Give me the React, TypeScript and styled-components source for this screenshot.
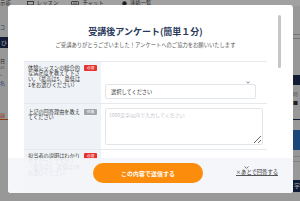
import React from "react";
import styled, { createGlobalStyle } from "styled-components";

const GlobalStyle = createGlobalStyle`
  html, body { margin: 0; padding: 0; }
  body {
    width: 300px;
    height: 201px;
    overflow: hidden;
    font-family: "Noto Sans CJK JP", "Noto Sans", sans-serif;
  }
`;

/* ---------- page behind the dialog ---------- */

const Page = styled.div`
  position: relative;
  width: 300px;
  height: 201px;
  overflow: hidden;
  background: #f1f1f1;
  display: flex;
  flex-direction: column;
`;

const TopNav = styled.nav`
  height: 6px;
  flex: none;
  background: #fff;
  display: flex;
  align-items: center;
  white-space: nowrap;
  overflow: hidden;
  font-size: 5.4px;
  line-height: 6px;
  color: #444;
`;

const NavItem = styled.span<{ $gap?: number }>`
  display: inline-flex;
  align-items: center;
  gap: 3px;
  margin-left: ${(p) => p.$gap ?? 0}px;
`;

const PageBody = styled.div`
  flex: 1;
  display: flex;
`;

const LeftRail = styled.div`
  width: 8px;
  overflow: hidden;
  display: flex;
  flex-direction: column;
  font-size: 5px;
  line-height: 6px;
  color: #333;
  white-space: nowrap;
`;

const RailText = styled.div<{ $color?: string; $top: number; $size?: number }>`
  margin-top: ${(p) => p.$top}px;
  font-size: ${(p) => p.$size ?? 5}px;
  color: ${(p) => p.$color ?? "#333"};
`;

const RailBlock = styled.div<{ $color: string; $top: number; $h: number }>`
  margin-top: ${(p) => p.$top}px;
  height: ${(p) => p.$h}px;
  background: ${(p) => p.$color};
  color: #fff;
  font-size: 6px;
  line-height: ${(p) => p.$h}px;
  padding-left: 1px;
  flex: none;
`;

const RailRule = styled.div<{ $color: string; $top: number }>`
  margin-top: ${(p) => p.$top}px;
  height: 1px;
  background: ${(p) => p.$color};
`;

const Main = styled.div`
  flex: 1;
`;

const RightRail = styled.div`
  width: 7px;
  overflow: hidden;
  display: flex;
  flex-direction: column;
  font-size: 5px;
  line-height: 6px;
  white-space: nowrap;
`;

const Overlay = styled.div`
  position: absolute;
  inset: 0;
  background: rgba(0, 0, 0, 0.37);
`;

/* ---------- dialog ---------- */

const Modal = styled.div`
  position: absolute;
  top: 5px;
  left: 8px;
  width: 285px;
  height: 188px;
  background: #fff;
  border-radius: 3px;
  overflow: hidden;
`;

const ModalBody = styled.div`
  padding: 21px 26px 0 16px;
`;

const Title = styled.h2`
  margin: 0;
  font-size: 9px;
  line-height: 12px;
  font-weight: 700;
  text-align: center;
  color: #28395a;
`;

const Lead = styled.p`
  margin: 3.5px 0 0;
  font-size: 5.3px;
  line-height: 7px;
  text-align: center;
  color: #555;
  white-space: nowrap;
`;

const Table = styled.div`
  margin-top: 12px;
  border-top: 1px solid #e6e9ee;
`;

const Row = styled.div<{ $h: number }>`
  display: grid;
  grid-template-columns: 77px 1fr;
  height: ${(p) => p.$h}px;
  border-bottom: 1px solid #e6e9ee;
`;

const LabelCell = styled.div<{ $pad: number }>`
  background: #eff2f6;
  padding: ${(p) => p.$pad}px 4px 0 4px;
  display: flex;
  align-items: flex-start;
  gap: 3px;
`;

const LabelText = styled.div`
  width: 53px;
  font-size: 5.2px;
  line-height: 5.8px;
  color: #333;
`;

const Badge = styled.span<{ $tone: "required" | "optional" }>`
  flex: none;
  width: 13px;
  height: 6px;
  margin-top: 0.5px;
  border-radius: 1px;
  background: ${(p) => (p.$tone === "required" ? "#e5322d" : "#a2a5aa")};
  color: #fff;
  font-size: 3.8px;
  line-height: 6px;
  text-align: center;
`;

const InputCell = styled.div<{ $pad: string; $align: string }>`
  padding: ${(p) => p.$pad};
  display: flex;
  align-items: ${(p) => p.$align};
`;

const SelectWrap = styled.div`
  position: relative;
  width: 151px;
  height: 15px;
`;

const Select = styled.select`
  appearance: none;
  width: 100%;
  height: 100%;
  box-sizing: border-box;
  border: 1px solid #e2e5ea;
  border-radius: 2px;
  background: #fff;
  padding: 0 0 0 5px;
  font-family: inherit;
  font-size: 5.2px;
  color: #333;
  outline: none;
`;

const Chevron = styled.svg`
  position: absolute;
  right: 6px;
  top: 6px;
  pointer-events: none;
`;

const TextArea = styled.textarea`
  width: 158px;
  height: 37px;
  box-sizing: border-box;
  border: 1px solid #e2e5ea;
  border-radius: 2px;
  padding: 3px 3px;
  font-family: inherit;
  font-size: 5px;
  line-height: 6px;
  color: #333;
  resize: vertical;
  outline: none;
  &::placeholder {
    color: #c2c5ca;
  }
`;

const ScrollThumb = styled.div`
  position: absolute;
  left: 270px;
  top: 10px;
  width: 3px;
  height: 53px;
  border-radius: 2px;
  background: #c6c6c6;
`;

const Footer = styled.div`
  position: absolute;
  left: 0;
  right: 0;
  bottom: 0;
  height: 35px;
  box-sizing: border-box;
  padding: 5px 5px 0 0;
  background: rgba(244, 245, 249, 0.9);
  display: flex;
  justify-content: center;
  align-items: flex-start;
`;

const SubmitButton = styled.button`
  width: 110px;
  height: 20px;
  border: none;
  border-radius: 10px;
  background: #fb8c0c;
  color: #fff;
  font-family: inherit;
  font-size: 5.9px;
  font-weight: 700;
  letter-spacing: 0.1px;
`;

const LaterLink = styled.a`
  position: absolute;
  right: 15px;
  top: 11px;
  display: flex;
  flex-direction: column;
  align-items: center;
  font-size: 5.3px;
  line-height: 7px;
  color: #333;
  text-decoration: none;
  white-space: nowrap;
`;

const LaterText = styled.span`
  border-bottom: 0.6px solid #555;
  line-height: 6px;
`;

const ScrollHint = styled.svg`
  position: absolute;
  right: 44px;
  top: 8px;
`;

const MonitorIcon = () => (
  <svg width="7" height="5" viewBox="0 0 7 5">
    <rect x="0.5" y="0.5" width="6" height="3.4" fill="none" stroke="#444" strokeWidth="0.8" />
    <rect x="2" y="4.3" width="3" height="0.7" fill="#444" />
  </svg>
);

const ChatIcon = () => (
  <svg width="8" height="5" viewBox="0 0 8 5">
    <rect x="0.5" y="0.5" width="7" height="3.4" rx="0.6" fill="none" stroke="#444" strokeWidth="0.8" />
    <path d="M2 2.2h4" stroke="#444" strokeWidth="0.6" />
  </svg>
);

const DotIcon = () => (
  <svg width="5" height="5" viewBox="0 0 5 5">
    <circle cx="2.5" cy="2.5" r="2.2" fill="#333" />
  </svg>
);

const App: React.FC = () => {
  return (
    <>
      <GlobalStyle />
      <Page>
        <TopNav>
          <NavItem>示板</NavItem>
          <NavItem $gap={16}>
            <MonitorIcon />
            レッスン
          </NavItem>
          <NavItem $gap={13}>
            <ChatIcon />
            チャット
          </NavItem>
          <NavItem $gap={18}>
            <DotIcon />
            連絡一覧
          </NavItem>
        </TopNav>
        <PageBody>
          <LeftRail>
            <RailText $top={18} $color="#2f5fb3">
              コ
            </RailText>
            <RailBlock $top={7} $h={11} $color="#1c2c55">
              ひ
            </RailBlock>
            <RailText $top={10}>日</RailText>
            <RailText $top={0} $color="#777" $size={4}>
              35
            </RailText>
            <RailText $top={0} $color="#777">
              、
            </RailText>
            <RailText $top={4} $color="#2f5fb3">
              名
            </RailText>
            <RailText $top={26} $color="#e0581f">
              録
            </RailText>
            <RailRule $top={1} $color="#e0581f" />
          </LeftRail>
          <Main />
          <RightRail>
            <RailRule $top={28} $color="#bbb" />
            <RailRule $top={3} $color="#bbb" />
            <RailBlock $top={36} $h={10} $color="#1c2c55" />
            <RailText $top={6} $color="#888">
              時
            </RailText>
            <RailText $top={2}>■</RailText>
            <RailRule $top={14} $color="#1c2c55" />
            <RailBlock $top={10} $h={20} $color="#2d72c0" />
            <RailRule $top={6} $color="#ccc" />
            <RailRule $top={4} $color="#ccc" />
            <RailBlock $top={18} $h={12} $color="#1c2c55">
              字
            </RailBlock>
          </RightRail>
        </PageBody>
        <Overlay />
        <Modal>
          <ModalBody>
            <Title>受講後アンケート(簡単１分)</Title>
            <Lead>ご受講ありがとうございました！アンケートへのご協力をお願いいたします</Lead>
            <Table>
              <Row $h={41}>
                <LabelCell $pad={3}>
                  <LabelText>
                    体験レッスンの総合的な満足度を教えて下さい。（最高は5、最低は1をお選びください）
                  </LabelText>
                  <Badge $tone="required">必須</Badge>
                </LabelCell>
                <InputCell $pad="0 4px" $align="center">
                  <SelectWrap>
                    <Select defaultValue="">
                      <option value="">選択してください</option>
                      <option value="5">5</option>
                      <option value="4">4</option>
                      <option value="3">3</option>
                      <option value="2">2</option>
                      <option value="1">1</option>
                    </Select>
                    <Chevron width="4" height="3" viewBox="0 0 4 3">
                      <path d="M0.4 0.5 2 2.2 3.6 0.5" fill="none" stroke="#555" strokeWidth="0.7" />
                    </Chevron>
                  </SelectWrap>
                </InputCell>
              </Row>
              <Row $h={45}>
                <LabelCell $pad={5}>
                  <LabelText>上記の回答理由を教えてください</LabelText>
                  <Badge $tone="optional">任意</Badge>
                </LabelCell>
                <InputCell $pad="4px 4px 0 4px" $align="flex-start">
                  <TextArea placeholder="1000文字以内で入力してください" />
                </InputCell>
              </Row>
              <Row $h={45}>
                <LabelCell $pad={3}>
                  <LabelText>
                    担当者の説明はわかりやすかったですか？（最高は5、最低は1をお選びください）
                  </LabelText>
                  <Badge $tone="required">必須</Badge>
                </LabelCell>
                <InputCell $pad="0 4px" $align="center" />
              </Row>
            </Table>
          </ModalBody>
          <ScrollThumb />
          <Footer>
            <SubmitButton type="button">この内容で送信する</SubmitButton>
            <ScrollHint width="5" height="3" viewBox="0 0 5 3">
              <path d="M0.5 0.4 2.5 2.4 4.5 0.4" fill="none" stroke="#555" strokeWidth="0.8" />
            </ScrollHint>
            <LaterLink href="#">
              <LaterText>×あとで回答する</LaterText>
            </LaterLink>
          </Footer>
        </Modal>
      </Page>
    </>
  );
};

export default App;
